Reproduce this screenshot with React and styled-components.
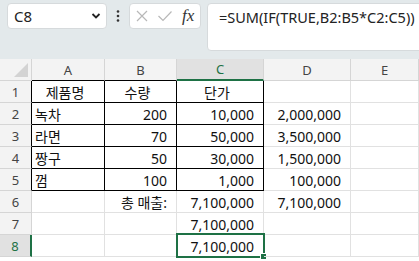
import React from 'react';
import styled, { createGlobalStyle } from 'styled-components';

const GREEN = '#1e7145';

const GlobalStyle = createGlobalStyle`
  body {
    margin: 0;
    background: #ffffff;
    font-family: "Noto Sans", "Noto Sans CJK KR", sans-serif;
  }
`;

const Page = styled.div`
  width: 419px;
  height: 261px;
  overflow: hidden;
  background: #ffffff;
`;

const Toolbar = styled.div`
  height: 59px;
  box-sizing: border-box;
  background: #e3e9eb;
  display: flex;
  align-items: flex-start;
  padding: 3px 0 0 7px;
`;

const NameBox = styled.div`
  width: 100px;
  height: 26px;
  box-sizing: border-box;
  background: #fff;
  border: 1px solid #d6dadc;
  border-radius: 4px;
  display: flex;
  align-items: center;
  justify-content: space-between;
  padding: 0 5px 0 5px;
  font-size: 15px;
  color: #222;
`;

const Dots = styled.div`
  width: 22px;
  height: 26px;
  display: flex;
  align-items: center;
  justify-content: center;
`;

const FxBox = styled.div`
  width: 72px;
  height: 26px;
  box-sizing: border-box;
  background: #fff;
  border: 1px solid #d6dadc;
  border-radius: 4px;
  display: flex;
  align-items: center;
  gap: 8px;
  padding: 0 4px 0 5px;
`;

const Fx = styled.span`
  font-family: "Liberation Serif", serif;
  font-style: italic;
  font-size: 17px;
  color: #333;
  margin-left: 1px;
`;

const FormulaBox = styled.div`
  flex: 1;
  height: 48px;
  margin-left: 6px;
  margin-right: -10px;
  box-sizing: border-box;
  background: #fff;
  border: 1px solid #d6dadc;
  border-radius: 4px;
  padding: 3px 0 0 11px;
  font-size: 14.5px;
  color: #222;
  white-space: nowrap;
`;

const Sheet = styled.div`
  display: grid;
  grid-template-columns: 32px 73px 72px 87px 87px 1fr;
  grid-auto-rows: 22px;
`;

const Corner = styled.div`
  background: #f3f3f3;
  border-right: 1px solid #d5d5d5;
  border-bottom: 1px solid #d5d5d5;
  position: relative;
  &::after {
    content: '';
    position: absolute;
    right: 3px;
    bottom: 3px;
    border-left: 14px solid transparent;
    border-bottom: 14px solid #d3d3d3;
  }
`;

const ColHead = styled.div`
  background: ${p => (p.$active ? '#e1e1e1' : '#f3f3f3')};
  color: ${p => (p.$active ? GREEN : '#444')};
  border-right: 1px solid #d5d5d5;
  border-bottom: ${p => (p.$active ? `2px solid ${GREEN}` : p.$dark ? '1px solid #000' : '1px solid #d5d5d5')};
  font-size: 13px;
  display: flex;
  align-items: center;
  justify-content: center;
`;

const RowHead = styled.div`
  background: ${p => (p.$active ? '#e1e1e1' : '#f3f3f3')};
  color: ${p => (p.$active ? GREEN : '#444')};
  border-bottom: 1px solid #d5d5d5;
  border-right: ${p => (p.$active ? `2px solid ${GREEN}` : p.$dark ? '1px solid #000' : '1px solid #d5d5d5')};
  font-size: 13px;
  display: flex;
  align-items: center;
  justify-content: center;
`;

const Cell = styled.div`
  position: relative;
  border-right: 1px solid ${p => (p.$dark ? '#000' : '#e1e1e1')};
  border-bottom: 1px solid ${p => (p.$dark ? '#000' : '#e1e1e1')};
  font-size: 14px;
  color: #111;
  display: flex;
  align-items: center;
  justify-content: ${p => p.$align};
  padding: 1px 9px 0 3px;
  white-space: nowrap;
  min-width: 0;
`;

const Selection = styled.div`
  position: absolute;
  top: -2px;
  left: -1px;
  right: -2px;
  bottom: -2px;
  border: 2px solid ${GREEN};
  pointer-events: none;
`;

const Handle = styled.div`
  position: absolute;
  right: -4px;
  bottom: -4px;
  width: 5px;
  height: 5px;
  background: ${GREEN};
  border: 1px solid #fff;
`;

const cols = ['A', 'B', 'C', 'D', 'E'];

const rows = [
  ['제품명', '수량', '단가', '', ''],
  ['녹차', '200', '10,000', '2,000,000', ''],
  ['라면', '70', '50,000', '3,500,000', ''],
  ['짱구', '50', '30,000', '1,500,000', ''],
  ['껌', '100', '1,000', '100,000', ''],
  ['', '총 매출:', '7,100,000', '7,100,000', ''],
  ['', '', '7,100,000', '', ''],
  ['', '', '7,100,000', '', ''],
];

const XIcon = () => (
  <svg width="14" height="14" viewBox="0 0 14 14">
    <path d="M2 2 L12 12 M12 2 L2 12" stroke="#b8b8b8" strokeWidth="1.2" fill="none" />
  </svg>
);

const CheckIcon = () => (
  <svg width="16" height="14" viewBox="0 0 16 14">
    <path d="M1.5 7 L6 11.5 L14.5 2.5" stroke="#b8b8b8" strokeWidth="1.2" fill="none" />
  </svg>
);

const Chevron = () => (
  <svg width="10" height="8" viewBox="0 0 10 8">
    <path d="M1.5 2 L5 5.5 L8.5 2" stroke="#222" strokeWidth="1.8" fill="none" />
  </svg>
);

const Kebab = () => (
  <svg width="4" height="12" viewBox="0 0 4 12">
    <circle cx="2" cy="1.5" r="1.3" fill="#333" />
    <circle cx="2" cy="6" r="1.3" fill="#333" />
    <circle cx="2" cy="10.5" r="1.3" fill="#333" />
  </svg>
);

export default function App() {
  return (
    <Page>
      <GlobalStyle />
      <Toolbar>
        <NameBox>
          <span style={{ marginLeft: 1 }}>C8</span>
          <Chevron />
        </NameBox>
        <Dots>
          <Kebab />
        </Dots>
        <FxBox>
          <XIcon />
          <CheckIcon />
          <Fx>fx</Fx>
        </FxBox>
        <FormulaBox>=SUM(IF(TRUE,B2:B5*C2:C5))</FormulaBox>
      </Toolbar>
      <Sheet>
        <Corner />
        {cols.map((c, i) => (
          <ColHead key={c} $active={c === 'C'} $dark={i <= 2}>
            {c}
          </ColHead>
        ))}
        {rows.map((row, r) => (
          <React.Fragment key={r}>
            <RowHead $active={r === 7} $dark={r <= 4}>
              {r + 1}
            </RowHead>
            {row.map((v, c) => (
              <Cell
                key={c}
                $dark={r <= 4 && c <= 2}
                $align={r === 0 ? 'center' : c === 0 ? 'flex-start' : 'flex-end'}
              >
                {v}
                {r === 7 && c === 2 && (
                  <Selection>
                    <Handle />
                  </Selection>
                )}
              </Cell>
            ))}
          </React.Fragment>
        ))}
      </Sheet>
    </Page>
  );
}
